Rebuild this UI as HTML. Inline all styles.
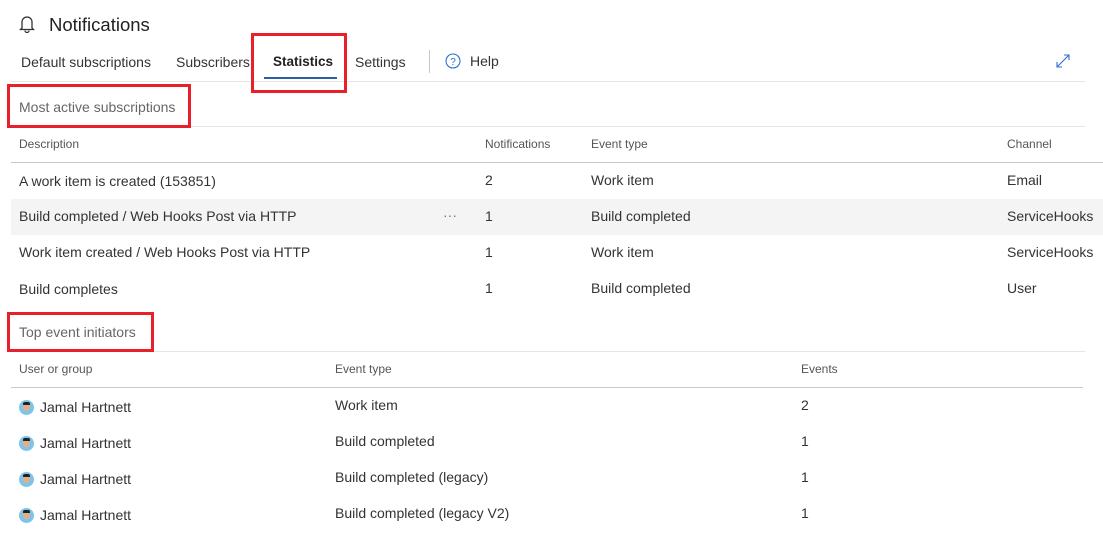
<!DOCTYPE html>
<html><head><meta charset="utf-8"><style>
*{margin:0;padding:0;box-sizing:border-box}
body{width:1103px;height:559px;background:#fff;font-family:"Segoe UI","Liberation Sans",sans-serif;color:#323130;position:relative;overflow:hidden}
.a{position:absolute;white-space:nowrap}
.t{font-size:14px;color:#333}
.h{font-size:12px;color:#555}
.line{position:absolute;height:1px;background:#e6e6e6}
.red{position:absolute;border:3px solid #e8202a}
.av{position:absolute;width:15px;height:15px;border-radius:50%;background:#7ec3ea;overflow:hidden}
.av:before{content:"";position:absolute;left:4px;top:3px;width:7px;height:8px;border-radius:3px;background:#e0b08a}
.av:after{content:"";position:absolute;left:4px;top:2px;width:7px;height:3px;background:#222;border-radius:2px 2px 0 0}
</style></head><body>
<svg class="a" style="left:19px;top:15px" width="16" height="18" viewBox="0 0 16 18"><path d="M3 13V7a5 5 0 0 1 10 0v6l1.5 1.5h-13z" fill="none" stroke="#333" stroke-width="1.3"/><path d="M6 15.5a2 2 0 0 0 4 0" fill="none" stroke="#333" stroke-width="1.3"/></svg>
<div class="a" style="left:49px;top:14px;font-size:18.5px;color:#222">Notifications</div>
<div class="a t" style="left:21px;top:54px">Default subscriptions</div>
<div class="a t" style="left:176px;top:54px">Subscribers</div>
<div class="a t" style="left:273px;top:54px;font-weight:bold;color:#222;font-size:13.5px">Statistics</div>
<div class="a" style="left:264px;top:77px;width:73px;height:2px;background:#2b5fa8"></div>
<div class="a t" style="left:355px;top:54px">Settings</div>
<div class="a" style="left:429px;top:50px;width:1px;height:23px;background:#c8c8c8"></div>
<svg class="a" style="left:445px;top:53px" width="16" height="16" viewBox="0 0 16 16"><circle cx="8" cy="8" r="7" fill="none" stroke="#2b6fcf" stroke-width="1.1"/><text x="8" y="12" font-size="10" text-anchor="middle" fill="#2b6fcf" font-family="Liberation Sans">?</text></svg>
<div class="a t" style="left:470px;top:53px">Help</div>
<svg class="a" style="left:1055px;top:53px" width="16" height="16" viewBox="0 0 16 16"><path d="M2 14L14 2M9 2h5v5M2 9v5h5" fill="none" stroke="#2b6fcf" stroke-width="1.1"/></svg>
<div class="line" style="left:11px;top:81px;width:1074px"></div>
<div class="a" style="left:19px;top:99px;font-size:14px;color:#666">Most active subscriptions</div>
<div class="line" style="left:11px;top:126px;width:1074px"></div>
<div class="a h" style="left:19px;top:137px">Description</div>
<div class="a h" style="left:485px;top:137px">Notifications</div>
<div class="a h" style="left:591px;top:137px">Event type</div>
<div class="a h" style="left:1007px;top:137px">Channel</div>
<div class="a" style="left:11px;top:162px;width:1092px;height:1px;background:#c8c8c8"></div>
<div class="a" style="left:11px;top:199px;width:1092px;height:36px;background:#f4f4f4"></div>
<div class="a t" style="left:19px;top:173px">A work item is created (153851)</div><div class="a t" style="left:485px;top:172px">2</div><div class="a t" style="left:591px;top:172px">Work item</div><div class="a t" style="left:1007px;top:172px">Email</div>
<div class="a t" style="left:19px;top:208px">Build completed / Web Hooks Post via HTTP</div><div class="a t" style="left:443px;top:207px;color:#777">···</div><div class="a t" style="left:485px;top:208px">1</div><div class="a t" style="left:591px;top:208px">Build completed</div><div class="a t" style="left:1007px;top:208px">ServiceHooks</div>
<div class="a t" style="left:19px;top:244px">Work item created / Web Hooks Post via HTTP</div><div class="a t" style="left:485px;top:244px">1</div><div class="a t" style="left:591px;top:244px">Work item</div><div class="a t" style="left:1007px;top:244px">ServiceHooks</div>
<div class="a t" style="left:19px;top:281px">Build completes</div><div class="a t" style="left:485px;top:280px">1</div><div class="a t" style="left:591px;top:280px">Build completed</div><div class="a t" style="left:1007px;top:280px">User</div>
<div class="a" style="left:19px;top:324px;font-size:14px;color:#666">Top event initiators</div>
<div class="line" style="left:11px;top:351px;width:1074px"></div>
<div class="a h" style="left:19px;top:362px">User or group</div>
<div class="a h" style="left:335px;top:362px">Event type</div>
<div class="a h" style="left:801px;top:362px">Events</div>
<div class="a" style="left:11px;top:387px;width:1072px;height:1px;background:#c8c8c8"></div>
<div class="av" style="left:19px;top:400px"></div><div class="a t" style="left:40px;top:399px">Jamal Hartnett</div><div class="a t" style="left:335px;top:397px">Work item</div><div class="a t" style="left:801px;top:397px">2</div>
<div class="av" style="left:19px;top:436px"></div><div class="a t" style="left:40px;top:435px">Jamal Hartnett</div><div class="a t" style="left:335px;top:433px">Build completed</div><div class="a t" style="left:801px;top:433px">1</div>
<div class="av" style="left:19px;top:472px"></div><div class="a t" style="left:40px;top:471px">Jamal Hartnett</div><div class="a t" style="left:335px;top:469px">Build completed (legacy)</div><div class="a t" style="left:801px;top:469px">1</div>
<div class="av" style="left:19px;top:508px"></div><div class="a t" style="left:40px;top:507px">Jamal Hartnett</div><div class="a t" style="left:335px;top:505px">Build completed (legacy V2)</div><div class="a t" style="left:801px;top:505px">1</div>
<div class="red" style="left:251px;top:33px;width:96px;height:60px"></div>
<div class="red" style="left:7px;top:84px;width:184px;height:44px"></div>
<div class="red" style="left:7px;top:312px;width:147px;height:40px"></div>
</body></html>
